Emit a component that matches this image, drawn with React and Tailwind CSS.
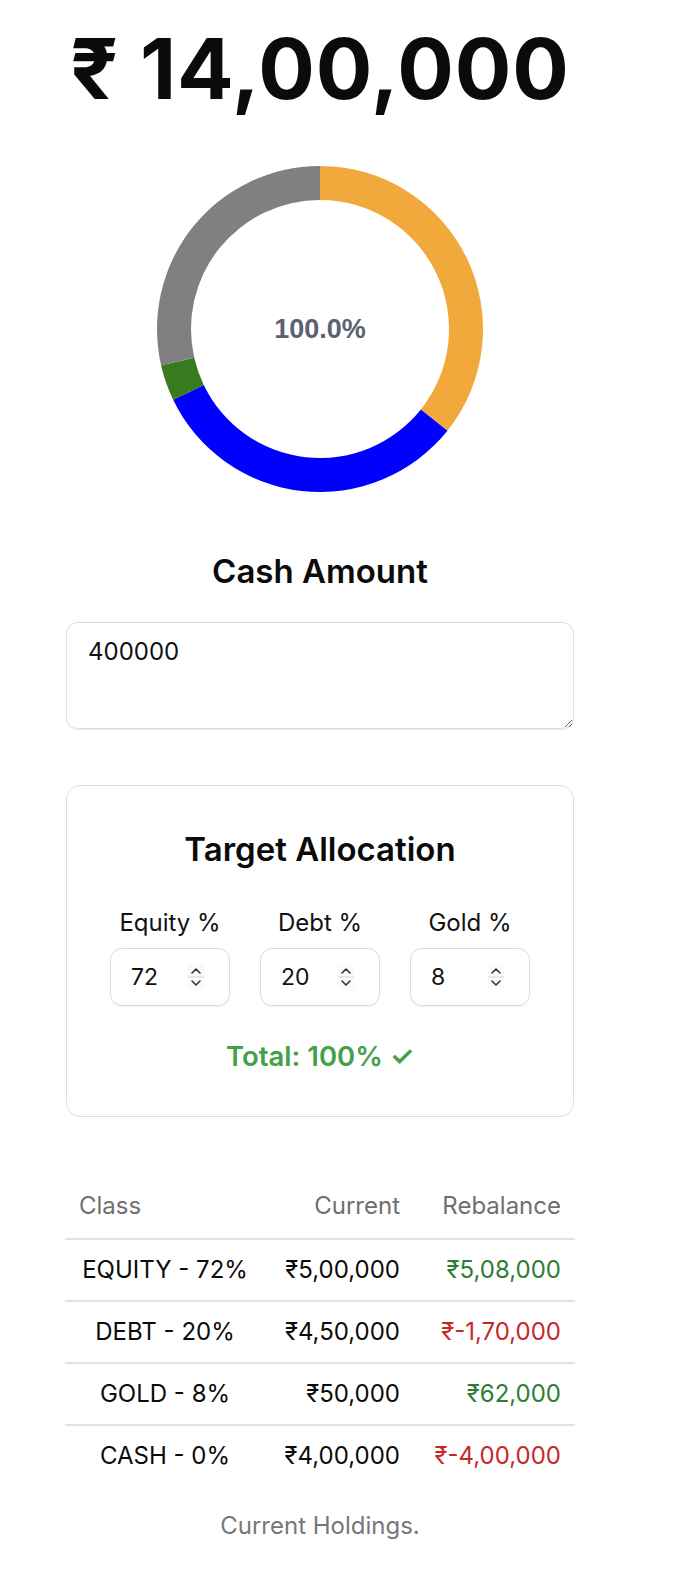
import { useState } from "react";

// Portfolio split used by both the donut and the table
const holdings = [
  { name: "EQUITY", target: 72, current: 500000, rebalance: 508000, color: "#f2a93c" },
  { name: "DEBT", target: 20, current: 450000, rebalance: -170000, color: "#0000ff" },
  { name: "GOLD", target: 8, current: 50000, rebalance: 62000, color: "#387b1f" },
  { name: "CASH", target: 0, current: 400000, rebalance: -400000, color: "#808080" },
];

// Indian digit grouping: 14,00,000
const formatINR = (n) => {
  const neg = n < 0;
  const s = String(Math.abs(n));
  let out = s;
  if (s.length > 3) {
    const last = s.slice(-3);
    let rest = s.slice(0, -3);
    const parts = [];
    while (rest.length > 2) {
      parts.unshift(rest.slice(-2));
      rest = rest.slice(0, -2);
    }
    if (rest) parts.unshift(rest);
    out = parts.join(",") + "," + last;
  }
  return (neg ? "-" : "") + out;
};

const Donut = () => {
  const size = 326;
  const c = size / 2;
  const R = 163;
  const r = 129;
  const total = holdings.reduce((sum, h) => sum + h.current, 0);

  const pt = (rad, a) => [c + rad * Math.sin(a), c - rad * Math.cos(a)];

  let start = 0;
  const slices = holdings.map((h) => {
    const end = start + (h.current / total) * Math.PI * 2;
    const large = end - start > Math.PI ? 1 : 0;
    const [x0, y0] = pt(R, start);
    const [x1, y1] = pt(R, end);
    const [x2, y2] = pt(r, end);
    const [x3, y3] = pt(r, start);
    const d = `M${x0} ${y0} A${R} ${R} 0 ${large} 1 ${x1} ${y1} L${x2} ${y2} A${r} ${r} 0 ${large} 0 ${x3} ${y3} Z`;
    start = end;
    return <path key={h.name} d={d} fill={h.color} />;
  });

  return (
    <svg width={size} height={size} viewBox={`0 0 ${size} ${size}`} className="mt-[55px] block">
      {slices}
      <text
        x={c}
        y={c + 9}
        textAnchor="middle"
        fontFamily="'Liberation Sans', Arial, sans-serif"
        fontWeight="700"
        fontSize="27"
        fill="#5c6070"
      >
        100.0%
      </text>
    </svg>
  );
};

const Spinner = () => (
  <svg width="18" height="26" viewBox="0 0 18 26" className="shrink-0">
    <rect x="0.5" y="0.5" width="17" height="25" rx="3" fill="#fafafa" />
    <path d="M5 9 L9 5 L13 9" fill="none" stroke="#333" strokeWidth="1.6" strokeLinecap="round" strokeLinejoin="round" />
    <line x1="1" y1="13" x2="17" y2="13" stroke="#d4d4d4" strokeWidth="1" />
    <path d="M5 17 L9 21 L13 17" fill="none" stroke="#333" strokeWidth="1.6" strokeLinecap="round" strokeLinejoin="round" />
  </svg>
);

const PercentInput = ({ label, value, onChange }) => (
  <div className="flex flex-col items-center">
    <label className="text-[24px] leading-[28px] text-[#111]">{label}</label>
    <div className="mt-[11px] w-[120px] h-[58px] flex items-center pl-[20px] pr-[24px] border border-[#dcdcdc] rounded-[12px] shadow-[0_1px_2px_rgba(0,0,0,0.06)] bg-white">
      <input
        type="text"
        value={value}
        onChange={(e) => onChange(e.target.value)}
        className="w-full min-w-0 text-[23px] text-[#111] outline-none bg-transparent"
      />
      <Spinner />
    </div>
  </div>
);

export default function App() {
  const [cash, setCash] = useState("400000");
  const [equity, setEquity] = useState("72");
  const [debt, setDebt] = useState("20");
  const [gold, setGold] = useState("8");

  const total = Number(equity) + Number(debt) + Number(gold);

  return (
    <div className="w-[640px] min-h-[1584px] flex flex-col items-center bg-white font-['Inter','Noto_Sans',sans-serif] text-[#0b0b0b]">
      <h1 className="mt-[27px] text-[84px] font-bold leading-none tracking-[0.01em]">
        ₹ {formatINR(1400000)}
      </h1>

      <Donut />

      <h2 className="mt-[59px] text-[33px] font-semibold leading-[40px]">Cash Amount</h2>

      <textarea
        value={cash}
        onChange={(e) => setCash(e.target.value)}
        className="mt-[31px] w-[508px] h-[107px] px-[21px] py-[12px] text-[24px] leading-[34px] text-[#111] border border-[#dcdcdc] rounded-[12px] shadow-[0_1px_2px_rgba(0,0,0,0.08)] outline-none"
      />

      <div className="mt-[56px] w-[508px] h-[332px] flex flex-col items-center pt-[43px] border border-[#dedede] rounded-[14px]">
        <h3 className="text-[33px] font-semibold leading-[40px]">Target Allocation</h3>
        <div className="mt-[40px] grid grid-cols-[150px_150px_150px]">
          <PercentInput label="Equity %" value={equity} onChange={setEquity} />
          <PercentInput label="Debt %" value={debt} onChange={setDebt} />
          <PercentInput label="Gold %" value={gold} onChange={setGold} />
        </div>
        <p className="mt-[34px] text-[27.5px] font-semibold leading-[32px] text-[#43a047]">
          Total: {total}% ✓
        </p>
      </div>

      <table className="mt-[56px] w-[510px] table-fixed border-collapse">
        <caption className="caption-bottom pt-[26px] text-[24px] leading-[28px] text-[#777]">
          Current Holdings.
        </caption>
        <colgroup>
          <col className="w-[200px]" />
          <col className="w-[150px]" />
          <col className="w-[160px]" />
        </colgroup>
        <thead>
          <tr className="border-b-2 border-[#e3e3e3]">
            <th className="px-[14px] pt-[19px] pb-[18px] text-left text-[24px] leading-[28px] font-normal text-[#6f6f6f]">Class</th>
            <th className="px-[15px] pt-[19px] pb-[18px] text-right text-[24px] leading-[28px] font-normal text-[#6f6f6f]">Current</th>
            <th className="px-[14px] pt-[19px] pb-[18px] text-right text-[24px] leading-[28px] font-normal text-[#6f6f6f]">Rebalance</th>
          </tr>
        </thead>
        <tbody>
          {holdings.map((h, i) => (
            <tr key={h.name} className={i < holdings.length - 1 ? "border-b-2 border-[#e3e3e3]" : ""}>
              <td className="px-[15px] py-[15px] text-center text-[24px] leading-[30px] text-[#0b0b0b]">
                {h.name} - {h.target}%
              </td>
              <td className="px-[15px] py-[15px] text-right text-[24px] leading-[30px] text-[#0b0b0b]">
                ₹{formatINR(h.current)}
              </td>
              <td
                className={`px-[14px] py-[15px] text-right text-[24px] leading-[30px] ${
                  h.rebalance < 0 ? "text-[#c62828]" : "text-[#2e7d32]"
                }`}
              >
                ₹{formatINR(h.rebalance)}
              </td>
            </tr>
          ))}
        </tbody>
      </table>
    </div>
  );
}
